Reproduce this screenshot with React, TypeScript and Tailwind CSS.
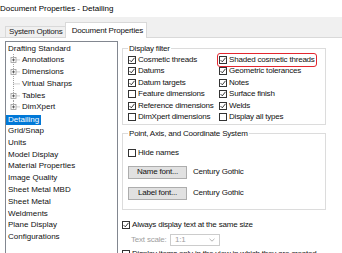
import React from 'react';

const FONT = { fontFamily: '"Liberation Sans", Arial, sans-serif' };

function Check({ on }: { on?: boolean }) {
  return (
    <span className="w-[8px] h-[8px] border border-[#333333] bg-white flex items-center justify-center flex-shrink-0">
      {on && (
        <svg width="6" height="6" viewBox="0 0 6 6">
          <path d="M0.6 3.1 L2.3 4.8 L5.5 0.8" fill="none" stroke="#222" strokeWidth="0.9" />
        </svg>
      )}
    </span>
  );
}

function Opt({ label, on, mark }: { label: string; on?: boolean; mark?: boolean }) {
  return (
    <div className="relative flex items-center gap-[2px] h-[11.5px]">
      <Check on={on} />
      <span className="whitespace-nowrap">{label}</span>
      {mark && (
        <span className="absolute -left-[2px] -right-[2px] -top-[1px] -bottom-[1px] border-[1.5px] border-[#e3262f] rounded-[3px]" />
      )}
    </div>
  );
}

// dotted tree gutter for child nodes
function Gutter({ plus, last }: { plus?: boolean; last?: boolean }) {
  return (
    <svg width="16" height="11.8" viewBox="0 0 16 11.8" className="flex-shrink-0">
      <line x1="7.5" y1="0" x2="7.5" y2={last ? 5.9 : 11.8} stroke="#a0a0a0" strokeWidth="1" strokeDasharray="1 1" />
      <line x1="7.5" y1="5.9" x2="14" y2="5.9" stroke="#a0a0a0" strokeWidth="1" strokeDasharray="1 1" />
      {plus && (
        <g>
          <rect x="5" y="3.4" width="5" height="5" fill="#fff" stroke="#9a9a9a" strokeWidth="0.8" />
          <line x1="6" y1="5.9" x2="9" y2="5.9" stroke="#444" strokeWidth="0.8" />
          <line x1="7.5" y1="4.4" x2="7.5" y2="7.4" stroke="#444" strokeWidth="0.8" />
        </g>
      )}
    </svg>
  );
}

const children = [
  { label: 'Annotations', plus: true },
  { label: 'Dimensions', plus: true },
  { label: 'Virtual Sharps', plus: false },
  { label: 'Tables', plus: true },
  { label: 'DimXpert', plus: true },
];

const rest = [
  'Grid/Snap',
  'Units',
  'Model Display',
  'Material Properties',
  'Image Quality',
  'Sheet Metal MBD',
  'Sheet Metal',
  'Weldments',
  'Plane Display',
  'Configurations',
];

export default function App() {
  return (
    <div className="w-[342px] h-[253px] overflow-hidden bg-white text-[8px] text-[#111111] whitespace-nowrap" style={FONT}>
      {/* title */}
      <div className="h-[17px] flex items-center text-black">Document Properties - Detailing</div>

      {/* tabs */}
      <div className="h-[21px] bg-[#f0f0f0] flex items-end pl-[5px] border-b border-[#d9d9d9] tracking-[-0.2px]">
        <div className="h-[11px] pl-[3px] pr-[2px] flex items-center border border-b-0 border-r-0 border-[#d9d9d9] bg-[#f0f0f0] text-[#222]">
          System Options
        </div>
        <div className="h-[16px] pl-[6px] pr-[3px] -mb-[1px] flex items-start pt-[2px] border border-b-0 border-[#d9d9d9] bg-white">
          Document Properties
        </div>
      </div>

      <div className="flex pt-[3px] pl-[5px] gap-[4px]">
        {/* tree list */}
        <div className="w-[113px] h-[220px] border border-[#828790] pt-[0.5px] leading-[11.8px]">
          <div className="pl-[2px] h-[11.8px]">Drafting Standard</div>
          {children.map((c, i) => (
            <div key={c.label} className="flex h-[11.8px]">
              <Gutter plus={c.plus} last={i === children.length - 1} />
              <span>{c.label}</span>
            </div>
          ))}
          <div className="h-[11.8px] flex items-end">
            <span className="bg-[#0078d7] text-white px-[2px] h-[10px] flex items-center">Detailing</span>
          </div>
          {rest.map((r) => (
            <div key={r} className="pl-[2px] h-[11.8px]">{r}</div>
          ))}
        </div>

        {/* right pane */}
        <div className="w-[204px] flex flex-col pt-[2px] tracking-[-0.2px]">
          <fieldset className="border border-[#dcdcdc] pl-[5px] pb-[1px]">
            <legend className="px-[1px] h-[11px] leading-[11px] text-left">Display filter</legend>
            <div className="flex">
              <div className="w-[91px] flex flex-col">
                <Opt label="Cosmetic threads" on />
                <Opt label="Datums" on />
                <Opt label="Datum targets" on />
                <Opt label="Feature dimensions" />
                <Opt label="Reference dimensions" on />
                <Opt label="DimXpert dimensions" />
              </div>
              <div className="flex flex-col">
                <Opt label="Shaded cosmetic threads" on mark />
                <Opt label="Geometric tolerances" on />
                <Opt label="Notes" on />
                <Opt label="Surface finish" on />
                <Opt label="Welds" on />
                <Opt label="Display all types" />
              </div>
            </div>
          </fieldset>

          <fieldset className="mt-[3px] border border-[#dcdcdc] pl-[5px] pb-[9px]">
            <legend className="px-[1px] h-[11px] leading-[11px] text-left">Point, Axis, and Coordinate System</legend>
            <div className="mt-[8px]">
              <Opt label="Hide names" />
            </div>
            <div className="flex items-center mt-[7px] gap-[6px]">
              <button className="w-[59px] h-[13px] bg-[#e1e1e1] border border-[#adadad] flex items-center justify-center">Name font...</button>
              <span>Century Gothic</span>
            </div>
            <div className="flex items-center mt-[8px] gap-[6px]">
              <button className="w-[59px] h-[13px] bg-[#e1e1e1] border border-[#adadad] flex items-center justify-center">Label font...</button>
              <span>Century Gothic</span>
            </div>
          </fieldset>

          <div className="mt-[10px]">
            <Opt label="Always display text at the same size" on />
          </div>
          <div className="flex items-center mt-[3px] pl-[9px] gap-[6px] text-[#a0a0a0]">
            <span className="w-[33px]">Text scale:</span>
            <div className="w-[50px] h-[12px] border border-[#cccccc] flex items-center justify-between px-[4px]">
              <span>1:1</span>
              <svg width="6" height="4" viewBox="0 0 6 4">
                <path d="M0.5 0.8 L3 3.2 L5.5 0.8" fill="none" stroke="#a0a0a0" strokeWidth="0.8" />
              </svg>
            </div>
          </div>
          <div className="mt-[2px]">
            <Opt label="Display items only in the view in which they are created" />
          </div>
        </div>
      </div>
    </div>
  );
}
